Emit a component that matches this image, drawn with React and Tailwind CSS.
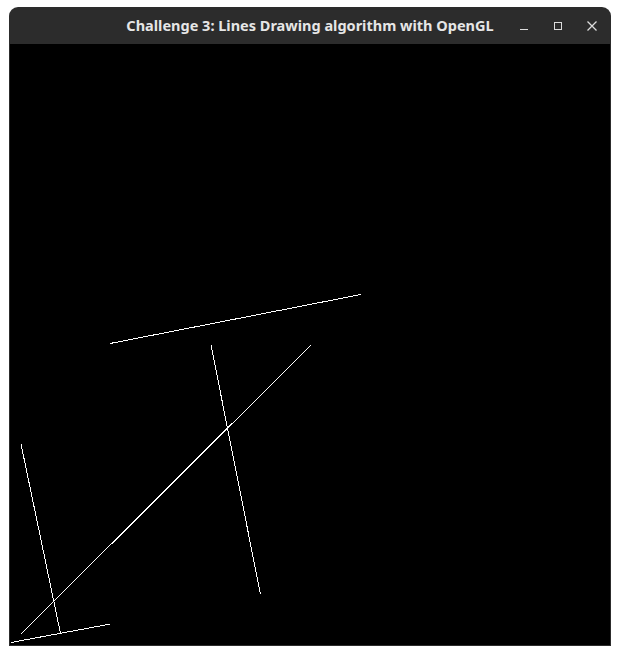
export default function App() {
  // line endpoints in canvas pixels (canvas origin at page 10,44)
  const lines = [
    [100, 299.5, 351, 250.5],
    [301, 301, 10.5, 590.5],
    [201, 301, 250.5, 550.5],
    [11, 400, 50.5, 589.5],
    [1, 598.5, 100.5, 580],
  ];

  return (
    <div className="w-[620px] h-[655px] bg-white pt-[7px] pl-[9px]">
      <div className="w-[602px] rounded-t-[9px] overflow-hidden">
        {/* title bar */}
        <div className="h-[37px] bg-[#2c2c2c] grid grid-cols-[1fr_auto_1fr] items-center">
          <div />
          <div className="text-[14.5px] font-bold text-[#e6e6e6] font-['Noto_Sans',sans-serif]">
            Challenge 3: Lines Drawing algorithm with OpenGL
          </div>
          <div className="flex justify-end items-center gap-[22px] pr-[13px] text-[#dcdcdc]">
            <svg width="12" height="12" viewBox="0 0 12 12">
              <path d="M2 9.5h8" stroke="currentColor" strokeWidth="1" />
            </svg>
            <svg width="12" height="12" viewBox="0 0 12 12">
              <rect x="2.5" y="2.5" width="7" height="7" fill="none" stroke="currentColor" strokeWidth="1" />
            </svg>
            <svg width="12" height="12" viewBox="0 0 12 12">
              <path d="M1.5 1.5l9 9M10.5 1.5l-9 9" stroke="currentColor" strokeWidth="1.3" />
            </svg>
          </div>
        </div>
        {/* gl canvas */}
        <div className="h-[602px] bg-black border-x border-b border-[#2c2c2c]">
          <svg width="600" height="601" shapeRendering="crispEdges">
            {lines.map(([x1, y1, x2, y2], i) => (
              <line key={i} x1={x1} y1={y1} x2={x2} y2={y2} stroke="#fff" strokeWidth="1" />
            ))}
          </svg>
        </div>
      </div>
    </div>
  );
}
